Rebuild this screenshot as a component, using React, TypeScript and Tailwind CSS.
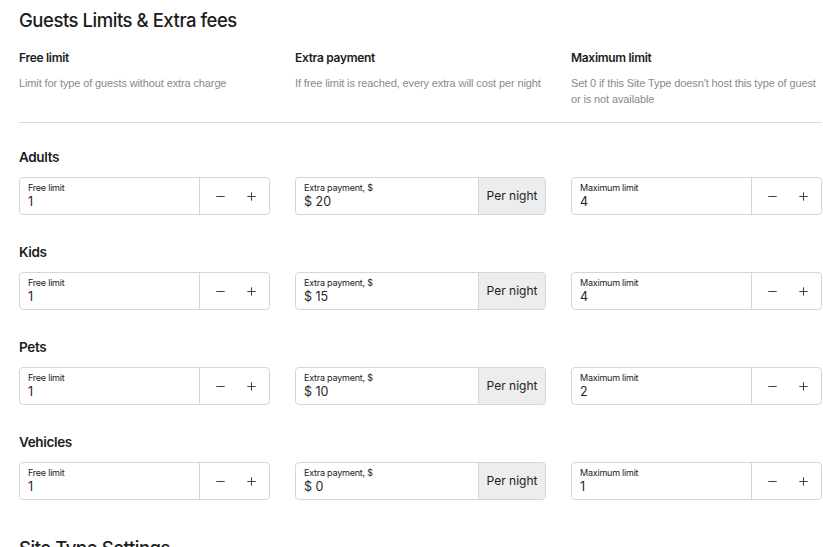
import { Minus, Plus } from "lucide-react";

type Row = {
  title: string;
  free: number;
  extra: number;
  max: number;
};

const rows: Row[] = [
  { title: "Adults", free: 1, extra: 20, max: 4 },
  { title: "Kids", free: 1, extra: 15, max: 4 },
  { title: "Pets", free: 1, extra: 10, max: 2 },
  { title: "Vehicles", free: 1, extra: 0, max: 1 },
];

const boxCls = "flex h-[38px] rounded-[4px] border border-[#d6d6d6] bg-white overflow-hidden";
const descCls = "mt-[9px] whitespace-nowrap text-[11px] leading-[16px] tracking-[-0.12px] text-[#8a8a8a]";
const headCls = "text-[12px] leading-[16px] font-semibold tracking-tight";
const descFont = { fontFamily: "'Liberation Sans', Arial, sans-serif" };

function Field({ label, value }: { label: string; value: string }) {
  return (
    <div className="flex-1 min-w-0 px-[8px] pt-[3px]">
      <div className="text-[9px] leading-[13px] text-[#222] tracking-tight">{label}</div>
      <div className="text-[12.5px] leading-[15px] text-[#1f1f1f]">{value}</div>
    </div>
  );
}

function Stepper() {
  return (
    <div className="flex w-[70px] items-center gap-[18px] border-l border-[#d6d6d6] pl-[14px] text-[#222]">
      <button type="button"><Minus size={13} strokeWidth={1.6} /></button>
      <button type="button"><Plus size={13} strokeWidth={1.6} /></button>
    </div>
  );
}

export default function App() {
  return (
    <div className="min-h-screen bg-white pl-[19px] pr-[1px] pt-[8px] text-[#1c1c1c]" style={{ fontFamily: "Inter, 'Liberation Sans', sans-serif" }}>
      <h1 className="text-[18.5px] leading-[24px] font-medium tracking-tight">Guests Limits &amp; Extra fees</h1>

      <div className="mt-[18px] grid grid-cols-[251px_251px_251px] gap-x-[25px]">
        <div>
          <div className={headCls}>Free limit</div>
          <p className={descCls} style={descFont}>Limit for type of guests without extra charge</p>
        </div>
        <div>
          <div className={headCls}>Extra payment</div>
          <p className={descCls} style={descFont}>If free limit is reached, every extra will cost per night</p>
        </div>
        <div>
          <div className={headCls}>Maximum limit</div>
          <p className={descCls} style={descFont}>
            Set 0 if this Site Type doesn't host this type of guest
            <br />
            or is not available
          </p>
        </div>
      </div>

      <div className="mt-[15px] border-t border-[#dcdcdc]" />

      <div className="mt-[24px] flex flex-col gap-[27px]">
        {rows.map(r => (
          <section key={r.title}>
            <h2 className="text-[13.5px] leading-[20px] font-semibold tracking-tight">{r.title}</h2>
            <div className="mt-[10px] grid grid-cols-[251px_251px_251px] gap-x-[25px]">
              <div className={boxCls}>
                <Field label="Free limit" value={String(r.free)} />
                <Stepper />
              </div>
              <div className={boxCls}>
                <Field label="Extra payment, $" value={`$ ${r.extra}`} />
                <div className="flex w-[67px] items-center justify-center border-l border-[#d6d6d6] bg-[#ededed] text-[12px] text-[#222]">
                  Per night
                </div>
              </div>
              <div className={boxCls}>
                <Field label="Maximum limit" value={String(r.max)} />
                <Stepper />
              </div>
            </div>
          </section>
        ))}
      </div>

      <h1 className="mt-[36px] text-[18.5px] leading-[24px] font-medium tracking-tight">Site Type Settings</h1>
      <div className="h-[200px]" />
    </div>
  );
}
